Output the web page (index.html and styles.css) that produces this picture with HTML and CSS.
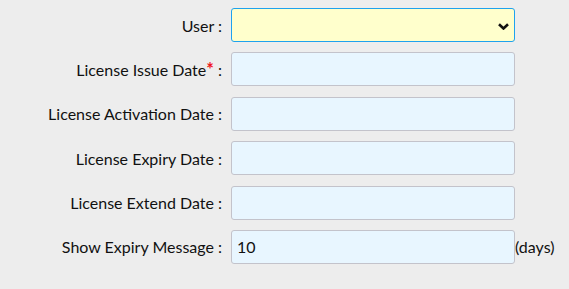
FILE: index.html
```html
<!DOCTYPE html>
<html>
<head>
    <title>License Details</title>
    <link rel="stylesheet" href="styles.css">
</head>
<body>
    <form class="license-form">
        <div class="form-row">
            <label class="form-label" for="user">User :</label>
            <div class="select-wrap">
                <select id="user" class="form-input form-select">
                    <option value=""></option>
                </select>
                <svg class="select-arrow" width="11" height="7" viewBox="0 0 11 7">
                    <path d="M1 1.3 L5.5 5.5 L10 1.3" fill="none" stroke="#111" stroke-width="2.6"/>
                </svg>
            </div>
        </div>
        <div class="form-row">
            <label class="form-label" for="issue-date">License Issue Date<span class="required">*</span> :</label>
            <input id="issue-date" class="form-input" type="text">
        </div>
        <div class="form-row">
            <label class="form-label" for="activation-date">License Activation Date :</label>
            <input id="activation-date" class="form-input" type="text">
        </div>
        <div class="form-row">
            <label class="form-label" for="expiry-date">License Expiry Date :</label>
            <input id="expiry-date" class="form-input" type="text">
        </div>
        <div class="form-row">
            <label class="form-label" for="extend-date">License Extend Date :</label>
            <input id="extend-date" class="form-input" type="text">
        </div>
        <div class="form-row">
            <label class="form-label" for="expiry-message">Show Expiry Message :</label>
            <input id="expiry-message" class="form-input" type="text" value="10">
            <span class="unit">(days)</span>
        </div>
    </form>
</body>
</html>
```

FILE: styles.css
```css
/* Page basics */
body {
    margin: 0;
    padding: 8px 0 0 0;
    background-color: #ededed;
    font-family: Lato, "Open Sans", sans-serif;
    font-size: 16px;
    color: #111;
}

.license-form {
    display: flex;
    flex-direction: column;
    gap: 10.4px;
}

/* One label + field per row */
.form-row {
    display: grid;
    grid-template-columns: 222px 284px auto;
    column-gap: 9px;
    align-items: center;
}

.form-label {
    text-align: right;
    white-space: nowrap;
}

.required {
    color: #f0141c;
    font-size: 18px;
    font-weight: bold;
}

.form-input {
    box-sizing: border-box;
    width: 284px;
    height: 34px;
    margin: 0;
    padding: 0 5px;
    border: 1px solid #c3c3cb;
    border-radius: 3px;
    background-color: #e8f6ff;
    font-family: inherit;
    font-size: 16px;
    color: #111;
    outline: none;
}

/* The user dropdown */
.select-wrap {
    position: relative;
    width: 284px;
    height: 34px;
}

.form-select {
    appearance: none;
    -webkit-appearance: none;
    background-color: #ffffcc;
    border-color: #1ea2ee;
}

.select-arrow {
    position: absolute;
    right: 6px;
    top: 15px;
    pointer-events: none;
}

.unit {
    margin-left: -9px;
}
```
